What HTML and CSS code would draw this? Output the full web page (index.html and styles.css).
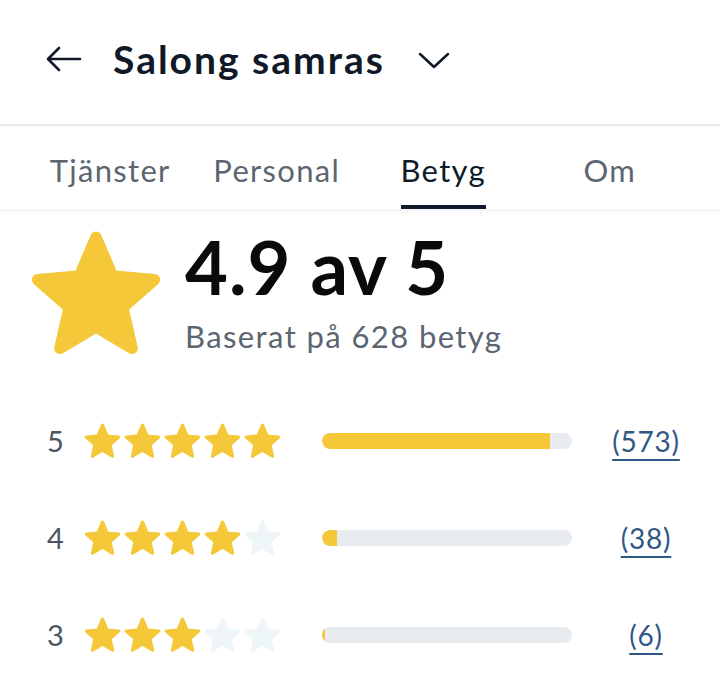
FILE: index.html
```html
<!DOCTYPE html>
<html lang="sv">
<head>
<meta charset="utf-8">
<title>Salong samras – Betyg</title>
<link rel="stylesheet" href="styles.css">
</head>
<body>
<svg width="0" height="0" class="defs" aria-hidden="true">
  <defs>
    <symbol id="star" viewBox="0 0 24 24">
      <polygon points="12,2.3 14.82,8.92 21.99,9.56 16.57,14.28 18.17,21.29 12,17.6 5.83,21.29 7.43,14.28 2.01,9.56 9.18,8.92" stroke-width="2" stroke-linejoin="round"/>
    </symbol>
  </defs>
</svg>
<header class="topbar">
  <svg class="back" width="36" height="26" viewBox="0 0 36 26" aria-hidden="true">
    <path d="M34 13H3M13 2L2 13l11 11" fill="none" stroke="#101928" stroke-width="2.6" stroke-linecap="round" stroke-linejoin="round"/>
  </svg>
  <h1 class="title">Salong samras</h1>
  <svg class="chev" width="32" height="18" viewBox="0 0 32 18" aria-hidden="true">
    <path d="M2 3l14 13L30 3" fill="none" stroke="#101928" stroke-width="2.5" stroke-linecap="round" stroke-linejoin="round"/>
  </svg>
</header>
<nav class="tabs">
  <div class="tab"><span>Tjänster</span></div>
  <div class="tab"><span>Personal</span></div>
  <div class="tab active"><span>Betyg</span></div>
  <div class="tab"><span>Om</span></div>
</nav>
<section class="summary">
  <svg class="bigstar star-on" width="140" height="140" aria-hidden="true"><use href="#star"/></svg>
  <div class="summary-text">
    <div class="score">4.9 av 5</div>
    <div class="based">Baserat på 628 betyg</div>
  </div>
</section>
<section class="rows">
  <div class="row">
    <span class="digit">5</span>
    <div class="stars">
      <svg class="star-on"><use href="#star"/></svg><svg class="star-on"><use href="#star"/></svg><svg class="star-on"><use href="#star"/></svg><svg class="star-on"><use href="#star"/></svg><svg class="star-on"><use href="#star"/></svg>
    </div>
    <div class="bar"><div class="fill" style="width:91.2%"></div></div>
    <div class="count"><a href="#">(573)</a></div>
  </div>
  <div class="row">
    <span class="digit">4</span>
    <div class="stars">
      <svg class="star-on"><use href="#star"/></svg><svg class="star-on"><use href="#star"/></svg><svg class="star-on"><use href="#star"/></svg><svg class="star-on"><use href="#star"/></svg><svg class="star-off"><use href="#star"/></svg>
    </div>
    <div class="bar"><div class="fill" style="width:6.1%"></div></div>
    <div class="count"><a href="#">(38)</a></div>
  </div>
  <div class="row">
    <span class="digit">3</span>
    <div class="stars">
      <svg class="star-on"><use href="#star"/></svg><svg class="star-on"><use href="#star"/></svg><svg class="star-on"><use href="#star"/></svg><svg class="star-off"><use href="#star"/></svg><svg class="star-off"><use href="#star"/></svg>
    </div>
    <div class="bar"><div class="fill" style="width:1%"></div></div>
    <div class="count"><a href="#">(6)</a></div>
  </div>
</section>
</body>
</html>
```

FILE: styles.css
```css
* { box-sizing: border-box; }
html, body { margin: 0; padding: 0; background: #ffffff; }
body {
  font-family: Lato, "Noto Sans", "Liberation Sans", sans-serif;
  color: #101928;
  width: 720px;
  overflow: hidden;
}
.defs { position: absolute; width: 0; height: 0; }

.topbar {
  height: 126px;
  display: flex;
  align-items: center;
  padding: 0 0 6px 46px;
  border-bottom: 2px solid #e8eaec;
}
.back { display: block; }
.title {
  margin: 0 0 0 31px;
  font-size: 39px;
  font-weight: 700;
  line-height: 1;
  color: #101928;
  letter-spacing: 2px;
}
.chev { display: block; margin-left: 33px; margin-top: 2px; }

.tabs {
  display: grid;
  grid-template-columns: repeat(4, 1fr);
  padding: 0 27px;
  height: 83px;
  box-shadow: 0 3px 4px rgba(0, 0, 0, 0.05);
}
.tab {
  display: flex;
  justify-content: center;
  align-items: flex-end;
  font-size: 31px;
  letter-spacing: 1.3px;
  color: #5c6670;
}
.tab span {
  display: block;
  padding-bottom: 19px;
  border-bottom: 4px solid transparent;
  line-height: 1;
}
.tab.active { color: #0d1b2a; }
.tab.active span { border-bottom-color: #0d1b2a; }

.summary {
  display: flex;
  align-items: flex-start;
  padding: 15px 0 0 26px;
  height: 183px;
}
.bigstar { display: block; flex: none; }
.summary-text { margin-left: 19px; padding-top: 6px; }
.score {
  font-size: 74px;
  font-weight: 700;
  line-height: 1;
  letter-spacing: 1px;
  color: #0a0a0a;
}
.based {
  margin-top: 14px;
  font-size: 31px;
  letter-spacing: 1.4px;
  line-height: 1.2;
  color: #5a6570;
}

.star-on { fill: #f5c83a; stroke: #f5c83a; }
.star-off { fill: #eef6f9; stroke: #eef6f9; }

.rows { display: flex; flex-direction: column; }
.row {
  display: flex;
  align-items: center;
  height: 97px;
  padding-left: 47px;
}
.digit {
  width: 37px;
  font-size: 29px;
  color: #4a5560;
  line-height: 1;
}
.stars { display: flex; gap: 2px; width: 198px; }
.stars svg { width: 40px; height: 40px; display: block; margin-left: -1px; }
.stars svg:first-child { margin-left: -1px; }
.bar {
  margin-left: 40px;
  width: 250px;
  height: 16px;
  border-radius: 8px;
  background: #e8ecf0;
  overflow: hidden;
}
.fill { height: 100%; background: #f5c83a; border-radius: 8px 0 0 8px; }
.count {
  flex: 1;
  text-align: center;
  font-size: 28px;
  letter-spacing: 0.8px;
  line-height: 1;
}
.count a {
  color: #2f5985;
  text-decoration: underline;
  text-decoration-thickness: 2px;
  text-underline-offset: 7px;
}
```
